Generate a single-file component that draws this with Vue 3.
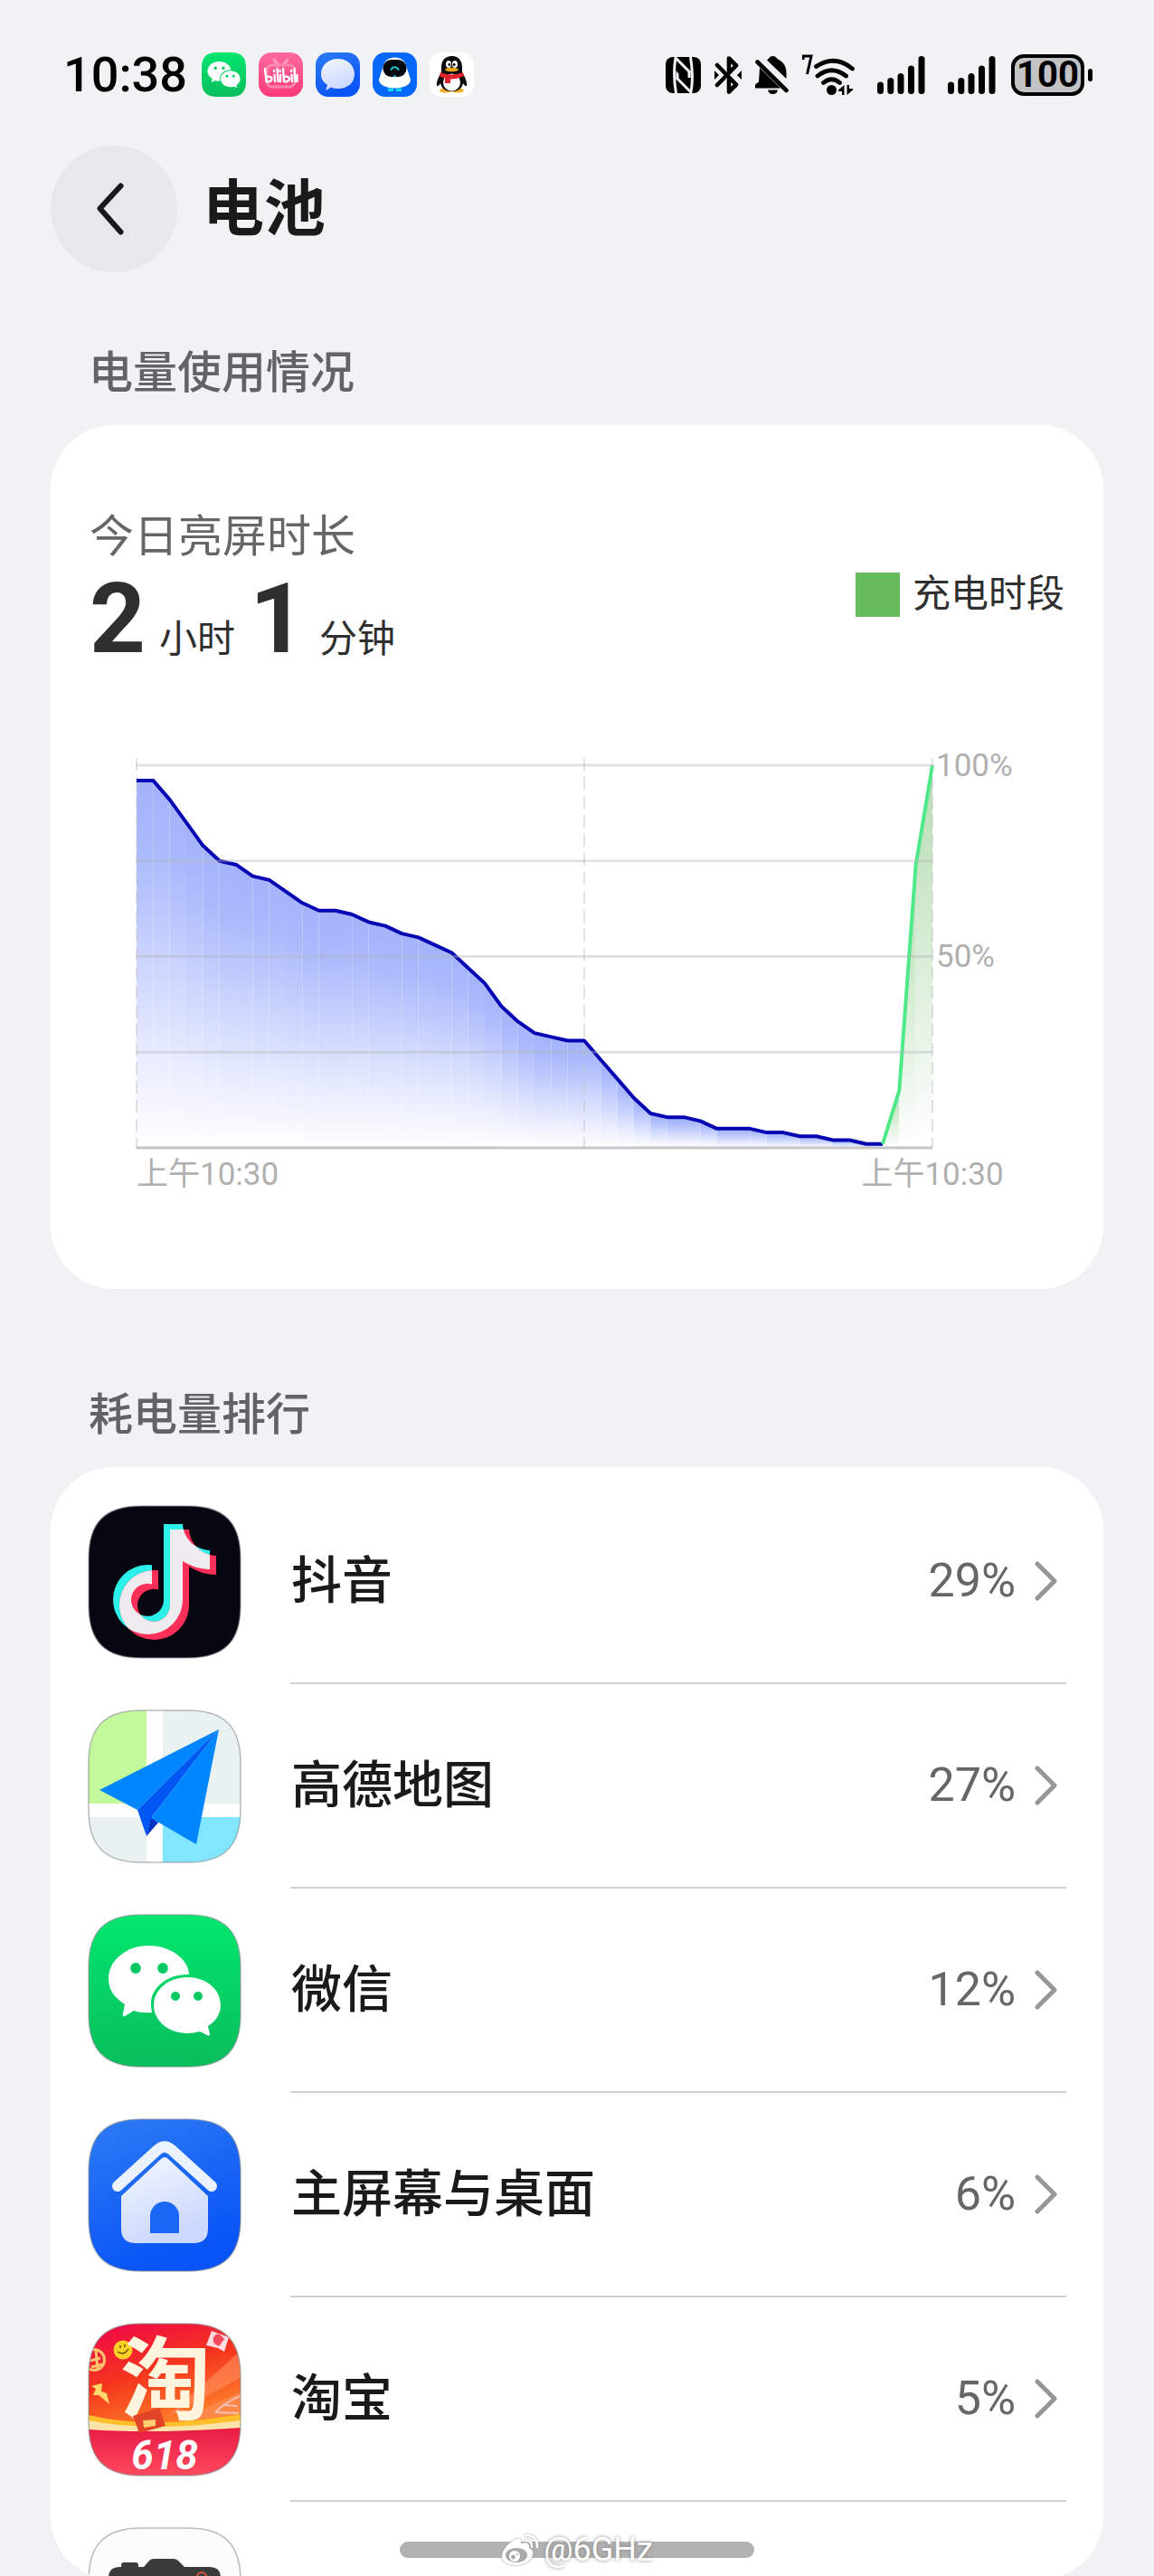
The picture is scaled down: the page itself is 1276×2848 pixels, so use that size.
<script setup>
const levels = [
  96, 96, 91, 85, 79, 75, 74, 71, 70, 67, 64, 62, 62, 61, 59, 58, 56, 55, 53, 51, 47, 43, 37, 33, 30,
  29, 28, 28, 23, 18, 13, 9, 8, 8, 7, 5, 5, 5, 4, 4, 3, 3, 2, 2, 1, 1, 15, 74, 100,
]
const chargeStart = 45

const chart = { left: 52, right: 932, top: 10, bottom: 433 }
const xAt = (i) => chart.left + ((chart.right - chart.left) * i) / (levels.length - 1)
const yAt = (v) => chart.bottom - ((chart.bottom - chart.top) * v) / 100

const segments = levels.slice(1).map((value, i) => ({
  id: i,
  fill: i >= chargeStart ? 'url(#fillCharge)' : 'url(#fillUse)',
  points: `${xAt(i)},${yAt(levels[i])} ${xAt(i + 1)},${yAt(value)} ${xAt(i + 1)},${chart.bottom} ${xAt(i)},${chart.bottom}`,
}))
const toPoints = (from, to) =>
  levels
    .slice(from, to + 1)
    .map((v, k) => `${xAt(from + k)},${yAt(v)}`)
    .join(' ')
const useLine = toPoints(0, chargeStart)
const chargeLine = toPoints(chargeStart, levels.length - 1)
const gridLines = [100, 75, 50, 25].map((v) => ({ v, y: yAt(v) }))
const dashes = [chart.left, xAt(27), chart.right]

const apps = [
  { icon: 'douyin', name: '抖音', share: '29%' },
  { icon: 'amap', name: '高德地图', share: '27%' },
  { icon: 'wechat', name: '微信', share: '12%' },
  { icon: 'home', name: '主屏幕与桌面', share: '6%' },
  { icon: 'taobao', name: '淘宝', share: '5%' },
  { icon: 'camera', name: '', share: '' },
]
const tile =
  'M58 0H110C150 0 168 18 168 58V110C168 150 150 168 110 168H58C18 168 0 150 0 110V58C0 18 18 0 58 0Z'
const note =
  'M83 20H104C105 36 117 48 134 49V70C123 70 112 66 104 61V103.5A38.5 38.5 0 1 1 65.5 65Q68 65 70 65.3V86.5A18 18 0 1 0 83 104Z'
</script>

<template>
  <div class="screen">
    <svg class="defs" width="0" height="0" aria-hidden="true">
      <defs>
        <clipPath id="tileClip"><path :d="tile" /></clipPath>
        <clipPath id="noteClip"><path :d="note" /></clipPath>
        <linearGradient id="gWechat" x1="0" y1="0" x2="0" y2="1">
          <stop offset="0" stop-color="#02e76f" /><stop offset="1" stop-color="#09bd5c" />
        </linearGradient>
        <linearGradient id="gHome" x1="0" y1="0" x2="0.4" y2="1">
          <stop offset="0" stop-color="#2e7bf5" /><stop offset="1" stop-color="#0854f6" />
        </linearGradient>
        <linearGradient id="gHouse" x1="0" y1="0" x2="0.4" y2="1">
          <stop offset="0" stop-color="#f3f7ff" /><stop offset="1" stop-color="#ccd8fd" />
        </linearGradient>
        <linearGradient id="gTao" x1="0.2" y1="0" x2="0.5" y2="1">
          <stop offset="0" stop-color="#ef0a45" /><stop offset="0.35" stop-color="#f5361d" />
          <stop offset="0.75" stop-color="#ff8a2a" />
        </linearGradient>
        <linearGradient id="gBand" x1="0" y1="0" x2="0" y2="1">
          <stop offset="0" stop-color="#e91a45" /><stop offset="1" stop-color="#ff4a5e" />
        </linearGradient>
        <linearGradient id="gBili" x1="0" y1="0" x2="0" y2="1">
          <stop offset="0" stop-color="#ff6b9f" /><stop offset="1" stop-color="#ff3878" />
        </linearGradient>
        <g id="chatBubbles">
          <path fill="#fff" d="M66.5 34C91 34 111 50 111 66C88 65 69 80 69 98Q69 103 70 108Q58 109 50 106L40 112Q37 113 38 109L40 99C29 92 22 83 22 71C22 50 42 34 66.5 34Z" />
          <path fill="#fff" d="M109 69C129.500 69 146 82 146 100C146 110 140 118 132 123L134 132Q134 135 131 133L123 129Q116 131 109 131C88.500 131 72 117 72 100C72 83 88.500 69 109 69Z" />
          <ellipse cx="52" cy="59" rx="5.800" ry="6" fill="#07c964" /><ellipse cx="82" cy="59" rx="5.800" ry="6" fill="#07c964" />
          <circle cx="96" cy="90" r="5" fill="#07c964" /><circle cx="121" cy="90" r="5" fill="#07c964" />
        </g>
      </defs>
    </svg>

    <header class="status">
      <time class="clock">10:38</time>
      <div class="notices">
        <svg viewBox="0 0 168 168"><path :d="tile" fill="url(#gWechat)" /><use href="#chatBubbles" /></svg>
        <svg viewBox="0 0 49 49">
          <rect width="49" height="49" rx="14" fill="url(#gBili)" />
          <path d="M17 8l5 6M32 8l-5 6" stroke="#ff9cc0" stroke-width="3" stroke-linecap="round" />
          <rect x="9" y="14" width="31" height="24" rx="6" fill="none" stroke="#ff86b1" stroke-width="3" />
          <g fill="none" stroke="#fff" stroke-width="2.400" stroke-linecap="round" stroke-linejoin="round">
            <path d="M7 18l1.500 14c4 1 6-1 6-3s-3-3-6-2M17.500 25l.5 7M17 20v1M20.500 18l1 14M24 25v7M23.500 20v1M27 18l1 14c4 1 6-1 6-3s-3-3-6-2M36.500 25l.3 7M36 20v1M39.500 18l.7 14M42.500 25v7" />
          </g>
        </svg>
        <svg viewBox="0 0 49 49">
          <rect width="49" height="49" rx="14" fill="url(#gHome)" />
          <path d="M24.500 7C35 7 43 14 43 24S35 40 24.500 40Q20 40 17 38.500L12 41.500Q11 42 11.500 40.500L13 36C8.500 33 6 29 6 24C6 14 14 7 24.500 7Z" fill="url(#gHouse)" />
        </svg>
        <svg viewBox="0 0 49 49">
          <rect width="49" height="49" rx="14" fill="#0568fb" />
          <path d="M17 39.500h6v3.500h-6zM26 39.500h6v3.500h-6z" fill="#12d8ee" />
          <path d="M12 14C14 8 18 6 24.500 5.500C31 6 35 8 37 14L42 30C42 36 34 39.500 24.500 39.500S7 36 7 30Z" fill="#fff" />
          <rect x="11.500" y="8" width="26" height="19" rx="9" fill="#04070d" />
          <path d="M20.500 20c.5-5 7.500-5 8 0" fill="none" stroke="#17c3c8" stroke-width="2" />
          <path d="M22.500 25.500h4l-2 2.500z" fill="#12d8ee" />
        </svg>
        <svg viewBox="0 0 49 49">
          <rect width="49" height="49" rx="14" fill="#fff" />
          <ellipse cx="18" cy="42" rx="7" ry="2.500" fill="#f5b020" /><ellipse cx="31" cy="42" rx="7" ry="2.500" fill="#f5b020" />
          <path d="M24.500 4C32 4 36 9 36 17V22C39 27 42 33 41 37Q39 38 37 34C36 40 31 43 24.500 43S13 40 12 34Q10 38 8 37C7 33 10 27 13 22V17C13 9 17 4 24.500 4Z" fill="#0b0b0d" />
          <ellipse cx="24.500" cy="33" rx="9.500" ry="9.500" fill="#fff" />
          <ellipse cx="21" cy="13" rx="3" ry="4" fill="#fff" /><ellipse cx="28" cy="13" rx="3" ry="4" fill="#fff" />
          <circle cx="21.800" cy="13.500" r="1.400" /><circle cx="27.200" cy="13.500" r="1.400" />
          <ellipse cx="24.500" cy="19" rx="7.500" ry="2.200" fill="#f5a81c" />
          <path d="M12 22Q24 27 37 22L38 26Q29 30 23 29.500V34H17V28.500Q14 28 11 26.500Z" fill="#e0202c" />
        </svg>
      </div>

      <div class="system">
        <svg class="nfc" viewBox="0 0 39 40">
          <rect width="39" height="40" rx="8" fill="#000" />
          <path d="M11.500 40C9.500 28 9 12 11 1L26 16V23M27.500 0C29.500 12 30 28 28 39L13 24V15" fill="none" stroke="#f1f2f4" stroke-width="3" />
          <path d="M13 14L26 27" stroke="#000" stroke-width="4" />
        </svg>
        <svg class="bt" viewBox="0 0 30 42">
          <path d="M3 10L24 31.500L16 39.500V26M16 16V2.500L24 10.500L3 32" fill="none" stroke="#000" stroke-width="4.600" stroke-linejoin="round" stroke-linecap="round" />
          <path d="M0 16v10l5-5zM30 16v10l-5-5z" />
        </svg>
        <svg class="bell" viewBox="0 0 37 42">
          <path d="M5 13L28 35.500H0V31.500L4 28.500Z" /><path d="M13 4.500C15 3 16 0 19.500 0S24 3 26 4C32 7 34.500 12 34.500 19V25L13 4.500Z" />
          <path d="M14 37.500H25Q24 42 19.500 42T14 37.500Z" /><path d="M2.500 6.500L34.500 38" stroke="#000" stroke-width="4.600" stroke-linecap="round" />
        </svg>
        <svg class="wifi" viewBox="0 0 58 45">
          <path d="M1 6V2H10L5.500 22" fill="none" stroke="#000" stroke-width="3" />
          <g fill="none" stroke="#000" stroke-width="4.800" stroke-linecap="round">
            <path d="M15.500 13.500Q36 0 55.500 16M17 24Q32.500 11.500 48.500 24M23.500 31.500Q32.500 24 41.500 31.500" />
          </g>
          <circle cx="32.500" cy="39.500" r="5.500" />
          <path d="M40 39.500L46.500 34V45H44V41H40ZM56 39.500L49.500 45V34H52V38H56Z" />
        </svg>
        <svg v-for="n in 2" :key="n" class="signal" viewBox="0 0 53 42">
          <path d="M3.500 32V38.500M14.800 27.500V38.500M26 22.500V38.500M37.500 14V38.500M49 3.500V38.500" stroke="#000" stroke-width="7" stroke-linecap="round" />
        </svg>
        <div class="battery"><span>100</span><i></i></div>
      </div>
    </header>

    <nav class="title-bar">
      <button class="back" type="button" aria-label="返回">
        <svg viewBox="0 0 30 58"><path d="M26.500 3.500L3.500 28.500L26.500 54.500" fill="none" stroke="#18191b" stroke-width="6" stroke-linecap="round" stroke-linejoin="round" /></svg>
      </button>
      <h1>电池</h1>
    </nav>

    <main>
      <h2 class="label first">电量使用情况</h2>
      <section class="card usage">
        <div class="summary">
          <div>
            <p class="caption">今日亮屏时长</p>
            <p class="duration"><b>2</b><span>小时</span><b>1</b><span>分钟</span></p>
          </div>
          <p class="legend"><i></i>充电时段</p>
        </div>
        <svg class="chart" viewBox="0 0 1078 490" role="img" aria-label="电量曲线">
          <defs>
            <linearGradient id="fillUse" x1="0" y1="0" x2="0" y2="1">
              <stop offset="0" stop-color="#a3b3fc" /><stop offset="0.2" stop-color="#abbafc" />
              <stop offset="0.75" stop-color="#e8ecfe" /><stop offset="1" stop-color="#fff" />
            </linearGradient>
            <linearGradient id="fillCharge" x1="0" y1="0" x2="0" y2="1">
              <stop offset="0" stop-color="#b8deb4" /><stop offset="0.3" stop-color="#cae6c7" /><stop offset="1" stop-color="#fff" />
            </linearGradient>
          </defs>
          <polygon v-for="s in segments" :key="s.id" :points="s.points" :fill="s.fill" />
          <line v-for="x in dashes" :key="x" :x1="x" :x2="x" y1="2" :y2="chart.bottom" class="dash" />
          <polyline :points="useLine" class="line use" />
          <polyline :points="chargeLine" class="line charge" />
          <line v-for="g in gridLines" :key="g.v" :x1="chart.left" :x2="chart.right" :y1="g.y" :y2="g.y" class="grid" />
          <line :x1="chart.left" :x2="chart.right" :y1="chart.bottom" :y2="chart.bottom" class="base" />
          <text x="936" y="22">100%</text>
          <text x="936" y="233">50%</text>
          <text x="52" y="474">上午10:30</text>
          <text x="932" y="474" text-anchor="middle">上午10:30</text>
        </svg>
      </section>

      <h2 class="label">耗电量排行</h2>
      <section class="card ranking">
        <ul>
          <li v-for="app in apps" :key="app.icon">
            <a href="#">
              <svg class="icon" viewBox="0 0 168 168" aria-hidden="true">
                <g clip-path="url(#tileClip)">
                  <template v-if="app.icon === 'douyin'">
                    <rect width="168" height="168" fill="#060711" />
                    <path :d="note" fill="#2cf0ea" />
                    <path :d="note" fill="#fb2f58" transform="translate(7 6)" />
                    <g clip-path="url(#noteClip)"><path :d="note" fill="#eeecee" transform="translate(7 6)" /></g>
                  </template>
                  <template v-else-if="app.icon === 'amap'">
                    <rect width="168" height="168" fill="#fff" />
                    <path d="M0 0H64V103H0Z" fill="#c3f89b" />
                    <path d="M82 0H168V103H82ZM0 118H64V168H0Z" fill="#e9f1f1" />
                    <path d="M82 118H168V168H82Z" fill="#83e6ff" />
                    <path d="M64 139L69 117L77 124Z" fill="#0733c6" />
                    <path d="M144 21L12 88L54 110Z" fill="#0087ff" />
                    <path d="M144 21L54 110L64 139L69 119Z" fill="#0057f3" />
                    <path d="M144 21L69 119L119 148Z" fill="#0087ff" />
                  </template>
                  <template v-else-if="app.icon === 'wechat'">
                    <rect width="168" height="168" fill="url(#gWechat)" /><use href="#chatBubbles" />
                  </template>
                  <template v-else-if="app.icon === 'home'">
                    <rect width="168" height="168" fill="url(#gHome)" />
                    <path d="M32 74L76 34Q84 27 92 34L136 74" fill="none" stroke="#eaf1ff" stroke-width="12" stroke-linecap="round" stroke-linejoin="round" />
                    <path d="M80 44Q84 40 88 44L132 85V121Q132 137 116 137H52Q36 137 36 121V85Z" fill="url(#gHouse)" />
                    <path d="M68 126V107A16 16 0 0 1 100 107V126Z" fill="#1a66f5" />
                  </template>
                  <template v-else-if="app.icon === 'taobao'">
                    <rect width="168" height="168" fill="url(#gTao)" />
                    <path d="M168 30L84 105L168 60ZM168 75L100 108L168 100Z" fill="#ff8d5e" opacity="0.600" />
                    <path d="M0 101Q70 118 168 100V118H0Z" fill="#ffc02c" />
                    <path d="M0 107Q70 121 168 107V119H0Z" fill="#ffe3a8" />
                    <path d="M0 117Q70 122 168 115V168H0Z" fill="url(#gBand)" />
                    <circle cx="38" cy="29" r="10.500" fill="#fad126" />
                    <path d="M35 24v3M40 23v3M32 31q7 5 12-3" stroke="#5a4308" stroke-width="1.400" fill="none" />
                    <g fill="none" stroke="#ffc46e" stroke-width="3"><circle cx="6" cy="40" r="11.500" /><path d="M2 41L13 38M3 48L15 45M8 29L10 51" /></g>
                    <path d="M3 69L15 66L14 75L20 77L23 89L11 79L5 79L8 72Z" fill="#ffd96a" />
                    <path d="M136 8L155 15L150 31L143 27L130 24Z" fill="#ffdbe0" />
                    <path d="M138 15q5-8 12 2l-6 8q-8-3-6-10z" fill="#f4485f" />
                    <path d="M140 98Q152 86 168 80M140 98l26 1M150 90l14 1" fill="none" stroke="#f5c0b2" stroke-width="2" />
                  </template>
                  <template v-else>
                    <rect width="168" height="168" fill="#fbfcfc" />
                    <path d="M36 43V41Q36 38 39 38H52Q55 38 55 41V43H61L67 36Q69 34 72 34H94Q97 34 99 36L106 43H134Q146 43 146 55V130H22V55Q22 43 34 43Z" fill="#3a3a3b" />
                    <circle cx="125" cy="54" r="5" fill="none" stroke="#e0503f" stroke-width="2" />
                  </template>
                </g>
                <template v-if="app.icon === 'taobao'">
                  <text x="35" y="98" class="tao">淘</text>
                  <path d="M49 102L78 93L85 113L56 121Z" fill="#e24427" /><path d="M60 107L74 106L74 113L61 115Z" fill="#ffce6e" />
                  <text x="84" y="161" class="sale">618</text>
                </template>
                <path :d="tile" fill="none" stroke="#8a8f94" stroke-opacity="0.600" stroke-width="1.500" />
              </svg>
              <span class="row">
                <span class="name">{{ app.name }}</span>
                <span class="share">{{ app.share }}</span>
                <svg class="chevron" viewBox="0 0 25 44"><path d="M3 3L22 22L3 41" fill="none" stroke="#979797" stroke-width="5" stroke-linecap="round" stroke-linejoin="round" /></svg>
              </span>
            </a>
          </li>
        </ul>
      </section>
    </main>

    <div class="home-bar"></div>
    <div class="watermark">
      <svg viewBox="0 0 42 36">
        <path d="M17 6C21 4 23 7 22 11C28 9 32 11 31 16C35 18 36 21 35 24C33 31 25 35 16 35C7 35 1 31 1 25C1 18 9 9 17 6Z" fill="#fff" />
        <ellipse cx="17" cy="24" rx="12" ry="8" fill="#a9a9a9" /><circle cx="15" cy="25" r="6" fill="#fff" />
        <circle cx="13.500" cy="26" r="2.400" fill="#a9a9a9" /><circle cx="18" cy="23" r="1.100" fill="#a9a9a9" />
        <path d="M27 8Q34 7 34 15M27 2Q40 1 40 15" fill="none" stroke="#fff" stroke-width="2.600" stroke-linecap="round" />
      </svg>
      <span>@6GHz</span>
    </div>
  </div>
</template>

<style>
body {
  margin: 0;
  background: #f1f2f4;
}
</style>

<style scoped>
.screen {
  position: relative;
  display: flex;
  flex-direction: column;
  height: 100vh;
  box-sizing: border-box;
  padding: 0 56px;
  overflow: hidden;
  background: #f1f2f4;
  color: #1a1a1b;
  font-family: Roboto, "Noto Sans CJK SC", sans-serif;
}
.defs {
  position: absolute;
}
h1,
h2,
p,
ul {
  margin: 0;
  padding: 0;
  list-style: none;
}
svg {
  display: block;
  flex: none;
}

.status {
  display: flex;
  align-items: center;
  padding: 50px 12px 46px 14px;
  color: #000;
}
.clock {
  font-size: 54px;
  line-height: 65px;
  font-weight: 500;
}
.notices {
  display: flex;
  gap: 14px;
  margin-left: 16px;
}
.notices svg {
  width: 49px;
  height: 49px;
}
.system {
  display: flex;
  align-items: center;
  gap: 15px;
  margin-left: auto;
}
.nfc {
  width: 39px;
  height: 40px;
}
.bt {
  width: 30px;
  height: 42px;
}
.bell {
  width: 37px;
  height: 42px;
}
.wifi {
  width: 58px;
  height: 45px;
}
.signal {
  width: 53px;
  height: 42px;
  margin-left: 10px;
}
.battery {
  display: flex;
  align-items: center;
  gap: 4px;
  margin-left: 2px;
}
.battery span {
  box-sizing: border-box;
  width: 81px;
  border: 4px solid #000;
  border-radius: 14px;
  background: #c3c3c5;
  font-size: 40px;
  line-height: 38px;
  font-weight: 700;
  text-align: center;
}
.battery i {
  width: 5px;
  height: 14px;
  border-radius: 3px;
  background: #000;
}

.title-bar {
  display: flex;
  align-items: center;
  gap: 28px;
}
.back {
  display: flex;
  align-items: center;
  justify-content: center;
  width: 140px;
  height: 140px;
  padding: 0 8px 0 0;
  border: 0;
  border-radius: 50%;
  background: #e7e8ea;
}
.back svg {
  width: 30px;
  height: 58px;
}
h1 {
  padding-top: 2px;
  font-size: 68px;
  line-height: 80px;
  font-weight: 700;
}

main {
  display: flex;
  flex: 1;
  flex-direction: column;
  min-height: 0;
}
.label {
  margin: 110px 42px 27px;
  color: #626365;
  font-size: 49px;
  line-height: 60px;
  font-weight: 500;
}
.label.first {
  margin-top: 82px;
}
.card {
  border-radius: 70px;
  background: #fff;
}

.usage {
  padding: 94px 43px 99px;
}
.summary {
  display: flex;
  align-items: center;
  justify-content: space-between;
  padding-bottom: 86px;
}
.caption {
  color: #666;
  font-size: 49px;
  line-height: 60px;
}
.duration {
  display: flex;
  align-items: baseline;
  padding-bottom: 6px;
  color: #2f2f2f;
}
.duration b {
  font-size: 108px;
  line-height: 120px;
}
.duration span {
  margin: 0 16px 0 15px;
  font-size: 42px;
}
.legend {
  display: flex;
  align-items: center;
  gap: 14px;
  color: #2f2f2f;
  font-size: 42px;
  line-height: 50px;
}
.legend i {
  width: 49px;
  height: 49px;
  background: #66bb5c;
}
.chart {
  width: 100%;
  overflow: visible;
}
.chart text {
  fill: #b0b0b0;
  font-size: 35px;
}
.grid {
  stroke: #b4b4ba;
  stroke-opacity: 0.4;
  stroke-width: 3;
}
.dash {
  stroke: #c4c4c6;
  stroke-width: 1;
  stroke-dasharray: 14 7;
}
.base {
  stroke: #c6c6c8;
  stroke-width: 3;
}
.line {
  fill: none;
  stroke-width: 4;
  stroke-linejoin: round;
}
.use {
  stroke: #0505b4;
}
.charge {
  stroke: #50e98a;
}

.ranking {
  flex: 1;
  min-height: 0;
  box-sizing: border-box;
  margin-bottom: -4px;
  padding: 14px 41px 0 42px;
  overflow: hidden;
}
.ranking a {
  display: flex;
  align-items: center;
  gap: 55px;
  height: 226px;
  color: inherit;
  text-decoration: none;
}
.icon {
  width: 168px;
  height: 168px;
  overflow: visible;
}
.row {
  display: flex;
  flex: 1;
  align-items: center;
  box-sizing: border-box;
  height: 226px;
  padding-right: 10px;
  border-bottom: 2px solid #d0d0d1;
}
.name {
  flex: 1;
  padding-left: 1px;
  font-size: 56px;
  line-height: 70px;
  font-weight: 500;
}
.share {
  color: #666;
  font-size: 52px;
  line-height: 70px;
}
.chevron {
  width: 25px;
  height: 44px;
  margin-left: 21px;
}
.tao {
  fill: #fff4dd;
  font-size: 100px;
  font-weight: 700;
}
.sale {
  fill: #fff;
  font-size: 44px;
  font-style: italic;
  font-weight: 700;
  text-anchor: middle;
}

.home-bar {
  position: absolute;
  bottom: 20px;
  left: 50%;
  width: 392px;
  height: 18px;
  margin-left: -196px;
  border-radius: 9px;
  background: #b2b2b2;
}
.watermark {
  position: absolute;
  right: 0;
  bottom: 8px;
  left: 0;
  display: flex;
  align-items: center;
  justify-content: center;
  gap: 5px;
  color: #fff;
  font-size: 36px;
  line-height: 42px;
  text-shadow: 0 0 4px #808080;
}
.watermark svg {
  width: 42px;
  height: 36px;
  filter: drop-shadow(0 0 1px #909090);
}
</style>
